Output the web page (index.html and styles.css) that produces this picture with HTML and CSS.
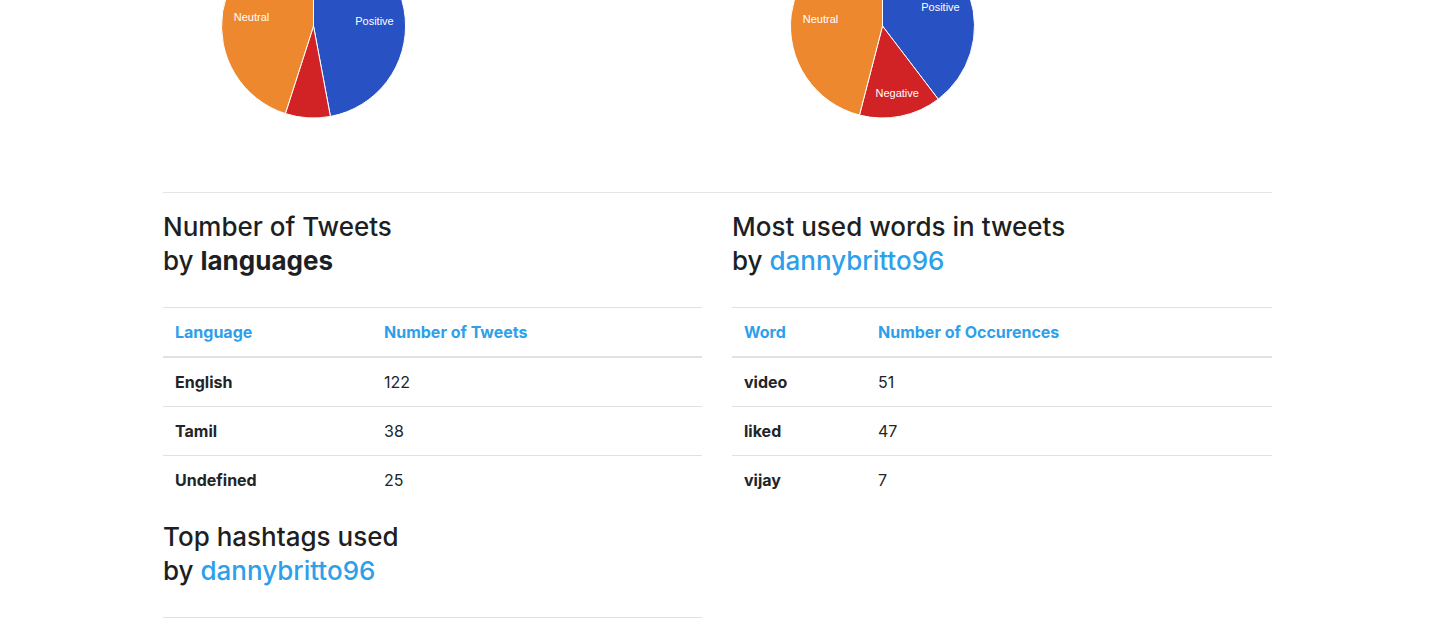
FILE: index.html
```html
<!DOCTYPE html>
<html lang="en">
<head>
<meta charset="utf-8">
<title>Tweet analysis</title>
<link rel="stylesheet" href="styles.css">
</head>
<body>
<main class="container">
  <section class="row charts">
    <div class="col">
      <svg class="pie" viewBox="0 0 400 300" width="400" height="300" aria-label="Sentiment of tweets">
        <g stroke="#ffffff" stroke-width="1">
          <path class="s-pos" d="M150.5,150 L150.5,58 A92,92 0 0 1 167.43,240.44 Z"/>
          <path class="s-neg" d="M150.5,150 L167.43,240.44 A92,92 0 0 1 122.37,237.59 Z"/>
          <path class="s-neu" d="M150.5,150 L122.37,237.59 A92,92 0 0 1 150.5,58 Z"/>
        </g>
        <text class="pie-label" x="70.8" y="144.5">Neutral</text>
        <text class="pie-label" x="192.2" y="148.7">Positive</text>
      </svg>
    </div>
    <div class="col">
      <svg class="pie" viewBox="0 0 400 300" width="400" height="300" aria-label="Sentiment of tweets">
        <g stroke="#ffffff" stroke-width="1">
          <path class="s-pos" d="M150.5,150 L150.5,58 A92,92 0 0 1 206.25,223.19 Z"/>
          <path class="s-neg" d="M150.5,150 L206.25,223.19 A92,92 0 0 1 127.46,239.07 Z"/>
          <path class="s-neu" d="M150.5,150 L127.46,239.07 A92,92 0 0 1 150.5,58 Z"/>
        </g>
        <text class="pie-label" x="70.8" y="147.3">Neutral</text>
        <text class="pie-label" x="189.2" y="134.7">Positive</text>
        <text class="pie-label" x="143.5" y="221.3">Negative</text>
      </svg>
    </div>
  </section>

  <hr class="divider">

  <section class="row">
    <div class="col">
      <h3 class="heading">Number of Tweets<br>by <strong>languages</strong></h3>
      <table class="table">
        <thead>
          <tr><th class="w-lang">Language</th><th>Number of Tweets</th></tr>
        </thead>
        <tbody>
          <tr><th>English</th><td>122</td></tr>
          <tr><th>Tamil</th><td>38</td></tr>
          <tr><th>Undefined</th><td>25</td></tr>
        </tbody>
      </table>

      <h3 class="heading">Top hashtags used<br>by <span class="handle">dannybritto96</span></h3>
      <div class="table-rule"></div>
    </div>
    <div class="col">
      <h3 class="heading">Most used words in tweets<br>by <span class="handle">dannybritto96</span></h3>
      <table class="table">
        <thead>
          <tr><th class="w-word">Word</th><th>Number of Occurences</th></tr>
        </thead>
        <tbody>
          <tr><th>video</th><td>51</td></tr>
          <tr><th>liked</th><td>47</td></tr>
          <tr><th>vijay</th><td>7</td></tr>
        </tbody>
      </table>
    </div>
  </section>
</main>
</body>
</html>
```

FILE: styles.css
```css
html, body {
  margin: 0;
  padding: 0;
  overflow: hidden;
  background: #ffffff;
}

body {
  font-family: Inter, "Noto Sans", "Liberation Sans", sans-serif;
  font-size: 16px;
  line-height: 1.5;
  color: #212529;
}

.container {
  width: 1109px;
  padding-right: 2px;
  margin: -124px auto 0;
}

.row {
  display: grid;
  grid-template-columns: 539px 540px;
  column-gap: 30px;
}

.pie {
  display: block;
}

.s-pos { fill: #2851c3; }
.s-neg { fill: #d12326; }
.s-neu { fill: #ee882f; }

.pie-label {
  font-family: "Liberation Sans", Arial, sans-serif;
  font-size: 11px;
  fill: #ffffff;
}

.divider {
  margin: 16px 0;
  border: 0;
  border-top: 1px solid rgba(0, 0, 0, 0.1);
}

.heading {
  margin: 0 0 29.8px;
  padding-top: 1px;
  font-size: 26px;
  line-height: 33.6px;
  font-weight: 500;
  color: #1d1f23;
}

.heading strong {
  font-weight: 700;
}

.handle {
  color: #2e9fea;
}

.table {
  width: 100%;
  margin-bottom: 15.5px;
  border-collapse: collapse;
}

.table th,
.table td {
  padding: 12px;
  text-align: left;
  vertical-align: top;
  border-top: 1px solid #dee2e6;
}

.table th {
  font-weight: 700;
}

.table td {
  font-weight: 400;
}

.table thead th {
  vertical-align: bottom;
  color: #2e9fea;
  border-bottom: 2px solid #dee2e6;
}

.w-lang { width: 185px; }
.w-word { width: 110px; }

.table-rule {
  border-top: 1px solid #dee2e6;
}
```
